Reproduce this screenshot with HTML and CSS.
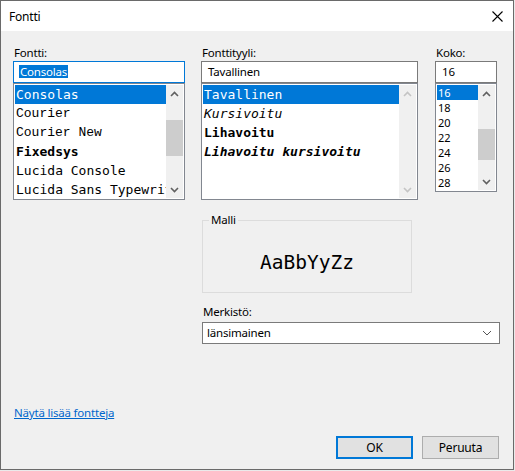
FILE: index.html
```html
<!DOCTYPE html>
<html lang="fi">
<head>
<meta charset="utf-8">
<title>Fontti</title>
<link rel="stylesheet" href="styles.css">
</head>
<body>
<div class="window">
  <div class="titlebar">
    <span class="title">Fontti</span>
    <svg class="close" width="11" height="11" viewBox="0 0 11 11"><path d="M0.5 0.5 L10.5 10.5 M10.5 0.5 L0.5 10.5" stroke="#000" stroke-width="1.1" fill="none"/></svg>
  </div>
  <div class="content">
    <div class="columns">
      <div class="col">
        <div class="label">Fontti:</div>
        <div class="input focused"><span class="sel">Consolas</span></div>
        <div class="list list-tall">
          <ul class="items items-font">
            <li class="selected f-mono">Consolas</li>
            <li class="f-courier">Courier</li>
            <li class="f-courier">Courier New</li>
            <li class="f-mono f-bold">Fixedsys</li>
            <li class="f-mono">Lucida Console</li>
            <li class="f-mono">Lucida Sans Typewriter</li>
          </ul>
          <div class="scrollbar">
            <div class="arrow"><svg width="9" height="6" viewBox="0 0 9 6"><path d="M1 5 L4.5 1.5 L8 5" stroke="#606060" stroke-width="1.6" fill="none"/></svg></div>
            <div class="track"><div class="thumb thumb-font"></div></div>
            <div class="arrow"><svg width="9" height="6" viewBox="0 0 9 6"><path d="M1 1 L4.5 4.5 L8 1" stroke="#606060" stroke-width="1.6" fill="none"/></svg></div>
          </div>
        </div>
      </div>
      <div class="col">
        <div class="label">Fonttityyli:</div>
        <div class="input">Tavallinen</div>
        <div class="list list-tall">
          <ul class="items items-font">
            <li class="selected f-mono">Tavallinen</li>
            <li class="f-mono f-italic">Kursivoitu</li>
            <li class="f-mono f-bold">Lihavoitu</li>
            <li class="f-mono f-bold f-italic">Lihavoitu kursivoitu</li>
          </ul>
          <div class="scrollbar">
            <div class="arrow"><svg width="9" height="6" viewBox="0 0 9 6"><path d="M1 5 L4.5 1.5 L8 5" stroke="#c4c4c4" stroke-width="1.6" fill="none"/></svg></div>
            <div class="track"></div>
            <div class="arrow"><svg width="9" height="6" viewBox="0 0 9 6"><path d="M1 1 L4.5 4.5 L8 1" stroke="#c4c4c4" stroke-width="1.6" fill="none"/></svg></div>
          </div>
        </div>
      </div>
      <div class="col col-size">
        <div class="label">Koko:</div>
        <div class="input">16</div>
        <div class="list list-short">
          <ul class="items items-size">
            <li class="selected">16</li>
            <li>18</li>
            <li>20</li>
            <li>22</li>
            <li>24</li>
            <li>26</li>
            <li>28</li>
          </ul>
          <div class="scrollbar">
            <div class="arrow"><svg width="9" height="6" viewBox="0 0 9 6"><path d="M1 5 L4.5 1.5 L8 5" stroke="#606060" stroke-width="1.6" fill="none"/></svg></div>
            <div class="track"><div class="thumb thumb-size"></div></div>
            <div class="arrow"><svg width="9" height="6" viewBox="0 0 9 6"><path d="M1 1 L4.5 4.5 L8 1" stroke="#606060" stroke-width="1.6" fill="none"/></svg></div>
          </div>
        </div>
      </div>
    </div>

    <div class="lower">
      <fieldset class="sample">
        <legend>Malli</legend>
        <div class="sample-text">AaBbYyZz</div>
      </fieldset>
      <div class="label label-charset">Merkistö:</div>
      <div class="dropdown">
        <span>länsimainen</span>
        <svg width="10" height="6" viewBox="0 0 10 6"><path d="M1 1 L5 5 L9 1" stroke="#555" stroke-width="1" fill="none"/></svg>
      </div>
    </div>

    <div class="link-row"><a class="more-link" href="#">Näytä lisää fontteja</a></div>

    <div class="buttons">
      <button class="btn btn-default">OK</button>
      <button class="btn">Peruuta</button>
    </div>
  </div>
</div>
</body>
</html>
```

FILE: styles.css
```css
* { box-sizing: border-box; }

html, body {
  margin: 0;
  padding: 0;
}

body {
  background: #eaeaea;
  font-family: "Noto Sans", "Open Sans", sans-serif;
  font-size: 11.5px;
  letter-spacing: -0.2px;
  color: #000;
}

.window {
  width: 514px;
  height: 470px;
  border: 1px solid #6a6a6a;
  background: #f0f0f0;
}

.titlebar {
  height: 30px;
  background: #fff;
  display: flex;
  align-items: center;
  justify-content: space-between;
  padding: 0 10px 0 8px;
}

.title {
  line-height: 16px;
  padding-top: 1px;
  font-size: 12px;
}

.close {
  display: block;
}

.content {
  padding: 14px 14px 0 12px;
}

.columns {
  display: grid;
  grid-template-columns: 172px 217px 63px;
  column-gap: 16px;
  align-items: start;
}

.col-size {
  margin-left: 1px;
}

.label {
  line-height: 16px;
  height: 16px;
  padding-left: 1px;
}

.input {
  height: 22px;
  border: 1px solid #7a7a7a;
  background: #fff;
  line-height: 20px;
  padding-left: 6px;
  white-space: nowrap;
  overflow: hidden;
}

.input.focused {
  border-color: #0078d7;
}

.sel {
  background: #0078d7;
  color: #fff;
  display: inline-block;
  line-height: 13px;
  padding: 0 1px;
  margin-left: -1px;
}

.list {
  border: 1px solid #828790;
  background: #fff;
  padding: 1px;
  display: flex;
}

.list-tall { height: 117px; }
.list-short { height: 109px; }

.items {
  list-style: none;
  margin: 0;
  padding: 0;
  flex: 1;
  min-width: 0;
  overflow: hidden;
}

.items li {
  white-space: nowrap;
  padding-left: 1px;
}

.items-font li {
  height: 19px;
  line-height: 19px;
  font-size: 13px;
  letter-spacing: 0;
}

.items-size li {
  height: 15px;
  line-height: 15px;
  font-size: 11px;
  letter-spacing: 0;
  overflow: hidden;
}

.items li.selected {
  background: #0078d7;
  color: #fff;
}

.f-mono { font-family: "DejaVu Sans Mono", monospace; }
.f-courier { font-family: "Liberation Mono", monospace; }
.f-bold { font-weight: bold; }
.f-italic { font-style: italic; }

.scrollbar {
  width: 17px;
  background: #f0f0f0;
  display: flex;
  flex-direction: column;
}

.arrow {
  height: 17px;
  display: flex;
  align-items: center;
  justify-content: center;
}

.arrow svg { display: block; }

.track {
  flex: 1;
}

.thumb {
  background: #cdcdcd;
}

.thumb-font {
  margin-top: 18px;
  height: 36px;
}

.thumb-size {
  margin-top: 27px;
  height: 31px;
}

.lower {
  margin-left: 189px;
}

.sample {
  margin: 12px 0 0 0;
  padding: 0;
  width: 210px;
  border: 1px solid #dcdcdc;
  min-width: 0;
}

.sample legend {
  margin-left: 6px;
  padding: 0 2px;
  line-height: 16px;
}

.sample-text {
  height: 64px;
  padding-top: 24px;
  line-height: 22px;
  text-align: center;
  font-family: "DejaVu Sans Mono", monospace;
  font-size: 19.5px;
  letter-spacing: 0;
}

.label-charset {
  margin-top: 11px;
}

.dropdown {
  margin-top: 2px;
  width: 298px;
  height: 22px;
  border: 1px solid #7a7a7a;
  background: #fff;
  display: flex;
  align-items: center;
  justify-content: space-between;
  padding: 0 7px 0 4px;
  line-height: 20px;
}

.dropdown svg { display: block; }

.link-row {
  margin-top: 61px;
  line-height: 16px;
  padding-left: 1px;
}

.more-link {
  color: #0066cc;
  text-decoration: underline;
}

.buttons {
  margin-top: 15px;
  display: flex;
  justify-content: flex-end;
  gap: 9px;
}

.btn {
  width: 77px;
  height: 23px;
  background: #e1e1e1;
  border: 1px solid #adadad;
  font-family: inherit;
  font-size: 12px;
  letter-spacing: -0.2px;
  color: #000;
  padding: 0;
  line-height: 20px;
}

.btn-default {
  border: 2px solid #0078d7;
}
```
